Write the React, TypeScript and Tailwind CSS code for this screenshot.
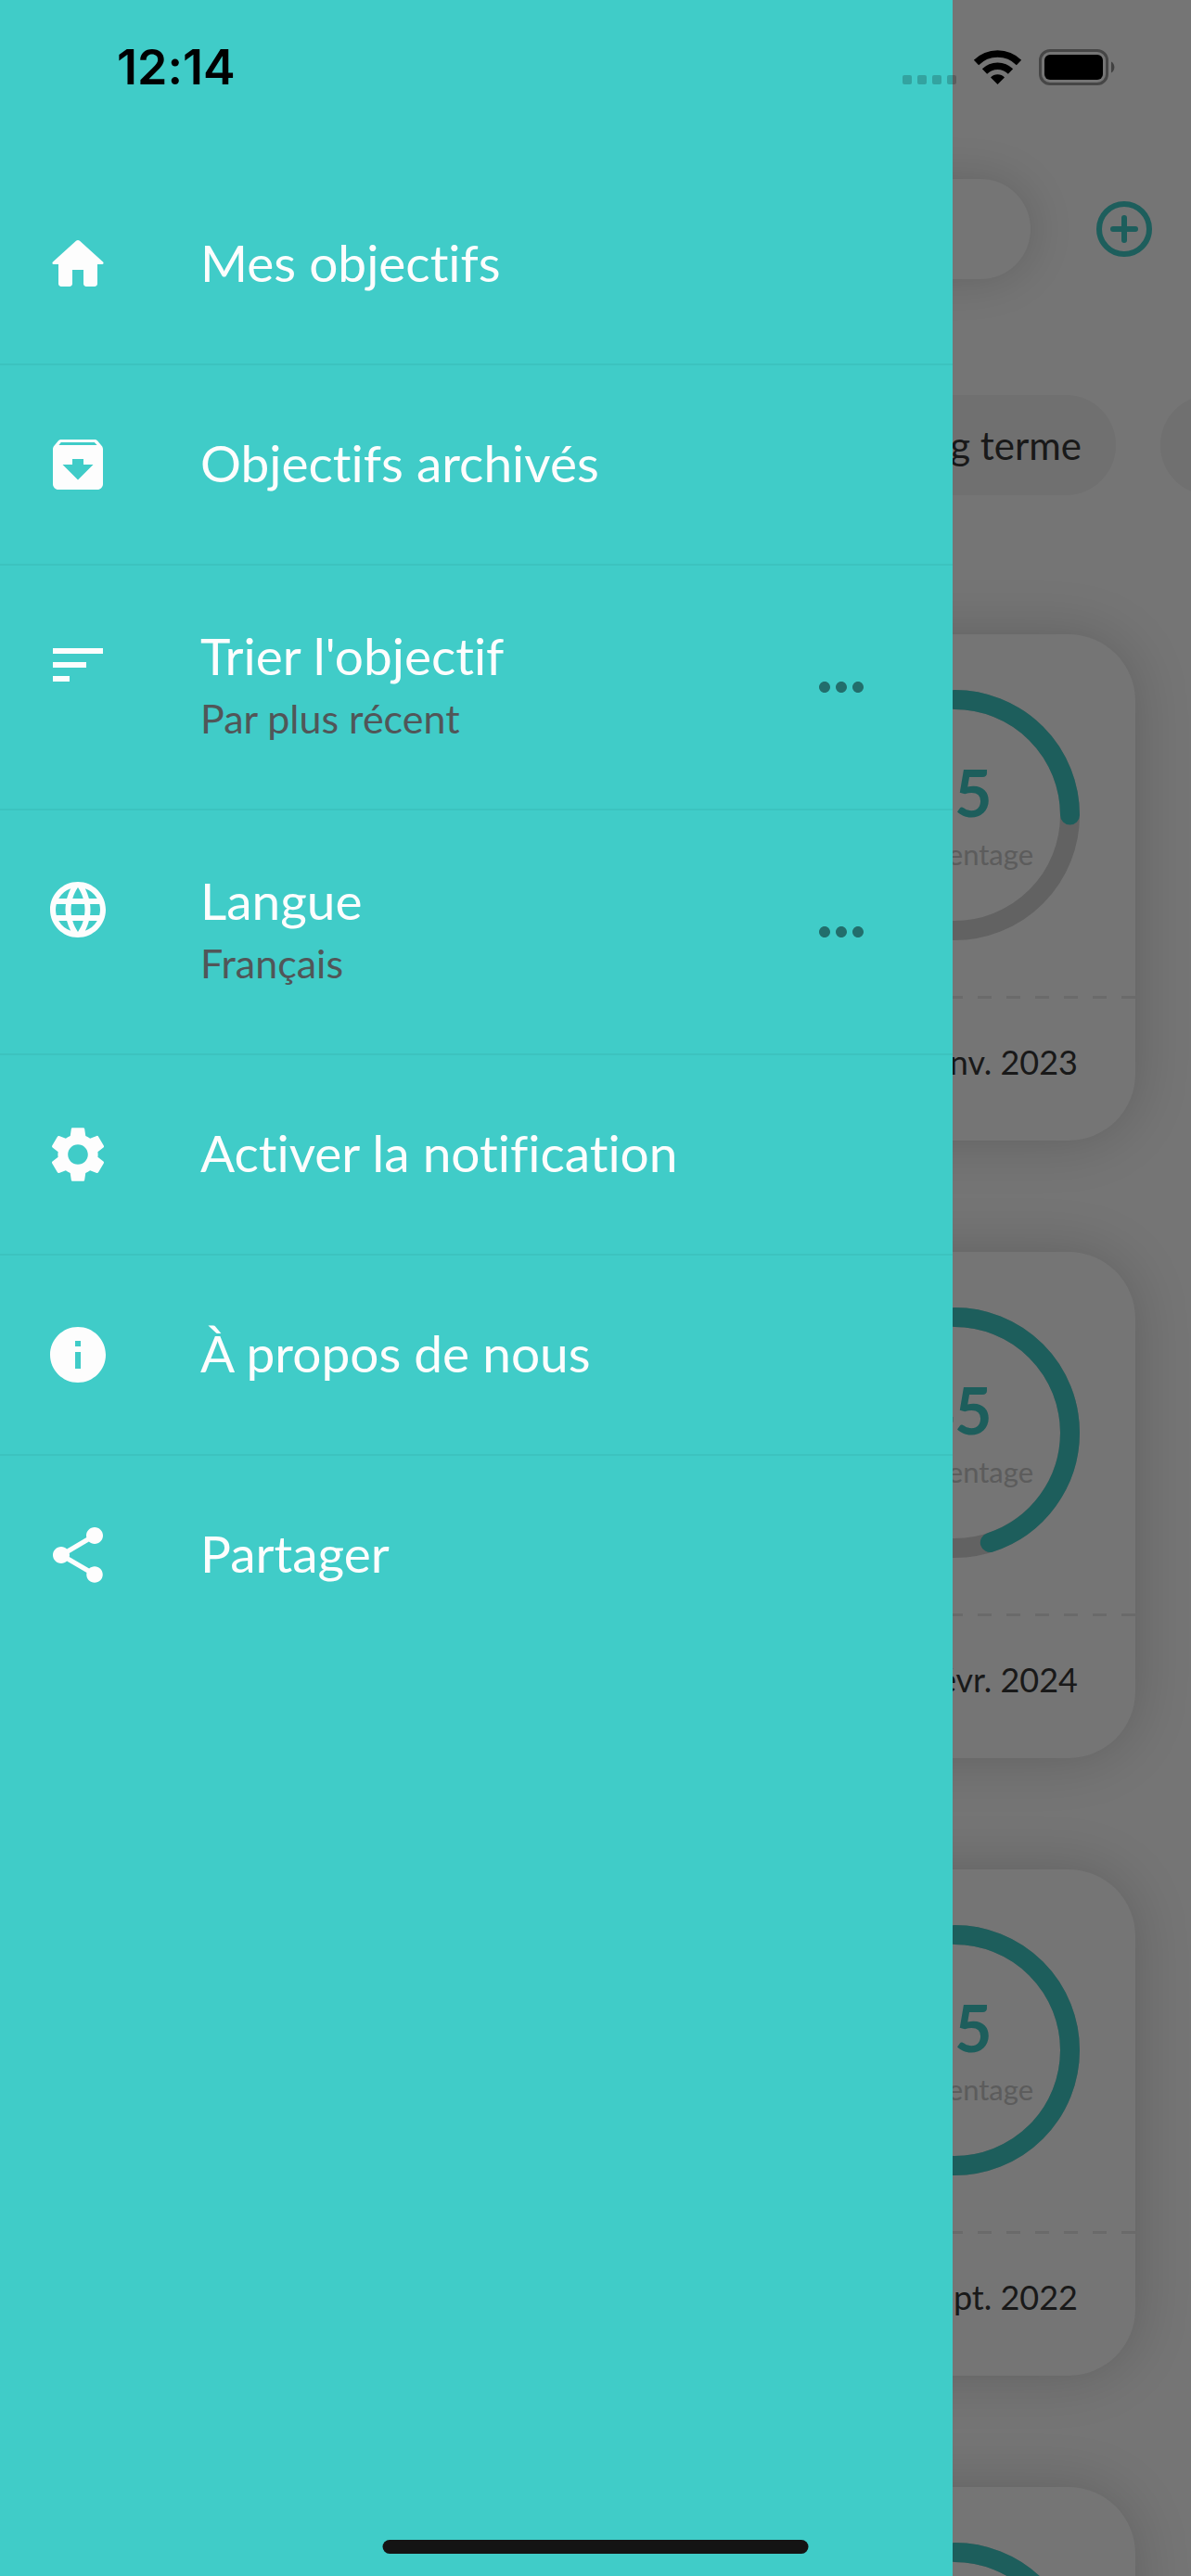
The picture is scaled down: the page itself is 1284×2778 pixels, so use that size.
import type { ReactNode } from 'react'
import { MdArchive, MdInfo, MdLanguage, MdMoreHoriz, MdSettings, MdShare, MdSort } from 'react-icons/md'

type MenuItem = {
  label: string
  detail?: string
  icon: ReactNode
}

const menu: MenuItem[] = [
  { label: 'Mes objectifs', icon: <HomeIcon /> },
  { label: 'Objectifs archivés', icon: <MdArchive className="size-18" /> },
  { label: "Trier l'objectif", detail: 'Par plus récent', icon: <MdSort className="size-18" /> },
  { label: 'Langue', detail: 'Français', icon: <MdLanguage className="size-18" /> },
  { label: 'Activer la notification', icon: <MdSettings className="size-18" /> },
  { label: 'À propos de nous', icon: <MdInfo className="size-18" /> },
  { label: 'Partager', icon: <MdShare className="size-18" /> },
]

const goals = [
  { percent: 25, date: '25 janv. 2023' },
  { percent: 45, date: '10 févr. 2024' },
  { percent: 75, date: '15 sept. 2022' },
  { percent: 75, date: '20 sept. 2022' },
]

function HomeIcon() {
  return (
    <svg viewBox="0 0 24 24" fill="currentColor" className="size-18">
      <path d="M10 19v-5h4v5c0 .55.45 1 1 1h3c.55 0 1-.45 1-1v-7h1.7c.46 0 .68-.57.33-.87L12.67 3.6c-.38-.34-.96-.34-1.34 0l-8.36 7.53c-.34.3-.13.87.33.87H5v7c0 .55.45 1 1 1h3c.55 0 1-.45 1-1z" />
    </svg>
  )
}

function StatusBar() {
  return (
    <div className="absolute inset-x-0 top-0 flex justify-between pl-[126px] pr-[82px] pt-[43px] text-black">
      <span className="font-[Inter,sans-serif] text-[52px] font-semibold leading-[60px]">12:14</span>
      <svg viewBox="0 0 229 40" className="mt-[10px] h-[40px] w-[229px]">
        <g fillOpacity="0.2">
          <rect x="0" y="28" width="10" height="10" rx="2" />
          <rect x="16" y="28" width="10" height="10" rx="2" />
          <rect x="32" y="28" width="10" height="10" rx="2" />
          <rect x="48" y="28" width="10" height="10" rx="2" />
        </g>
        <path d="M102.500 38 95 30.500a10.500 10.500 0 0 1 15 0z" />
        <path d="M88.500 24a19.800 19.800 0 0 1 28 0" fill="none" stroke="#000" strokeWidth="7.500" />
        <path d="M79.500 14.500a32.500 32.500 0 0 1 46 0" fill="none" stroke="#000" strokeWidth="7.500" />
        <rect x="148.500" y="1.500" width="72" height="36" rx="10.500" fill="none" stroke="#000" strokeOpacity="0.4" strokeWidth="3" />
        <rect x="153" y="6" width="63" height="27" rx="6" />
        <path d="M225 13.500a7 7 0 0 1 0 12z" fillOpacity="0.45" />
      </svg>
    </div>
  )
}

function Ring({ percent }: { percent: number }) {
  const length = 2 * Math.PI * 124.5
  return (
    <div className="relative size-[270px]">
      <svg viewBox="0 0 270 270" fill="none" strokeWidth="21" className="size-full -rotate-90">
        <circle cx="135" cy="135" r="124.5" stroke="#d5d5d5" />
        <circle
          cx="135"
          cy="135"
          r="124.5"
          stroke="#40ccc8"
          strokeLinecap="round"
          strokeDasharray={`${(length * percent) / 100} ${length}`}
        />
      </svg>
      <div className="absolute inset-0 flex flex-col items-center justify-center pt-1">
        <span className="text-[70px] font-bold leading-[80px] text-[#40ccc8]">{percent}</span>
        <span className="text-[31px] leading-[54px] text-[#c8c8c8]">Pourcentage</span>
      </div>
    </div>
  )
}

function GoalsPage() {
  return (
    <main className="flex flex-col bg-[#fefefe] pt-[193px]">
      <div className="flex items-center gap-[71px] pl-[60px] pr-[42px]">
        <input
          type="search"
          aria-label="Rechercher"
          className="h-[108px] min-w-0 flex-1 rounded-full bg-[#fefefe] px-12 shadow-[0_0_48px_rgba(0,0,0,0.16)]"
        />
        <button aria-label="Ajouter" className="text-[#40ccc8]">
          <svg viewBox="0 0 60 60" fill="none" stroke="currentColor" strokeWidth="6" strokeLinecap="round" className="size-[60px]">
            <circle cx="30" cy="30" r="27" />
            <path d="M30 18v24M18 30h24" />
          </svg>
        </button>
      </div>

      <div className="-mr-[207px] mt-[125px] flex justify-end gap-12 text-[42px] text-[#373737]">
        <button className="h-[108px] shrink-0 rounded-full bg-[#f3f3f3] px-[37px]">Long terme</button>
        <button aria-label="Terminés" className="h-[108px] w-[240px] shrink-0 rounded-full bg-[#f3f3f3]" />
      </div>

      <div className="mt-[150px] flex flex-col gap-[120px] px-[60px]">
        {goals.map((goal, i) => (
          <article key={i} className="rounded-[72px] bg-[#fefefe] shadow-[0_0_60px_rgba(0,0,0,0.18)]">
            <div className="flex justify-end p-[60px]">
              <Ring percent={goal.percent} />
            </div>
            <div className="h-[3px] bg-[repeating-linear-gradient(to_left,#e6e6e6_0_15px,transparent_15px_31px)]" />
            <p className="px-[62px] pb-[55px] pt-[38px] text-right text-[36px] leading-[60px] text-[#373737]">{goal.date}</p>
          </article>
        ))}
      </div>
    </main>
  )
}

function MenuRow({ item }: { item: MenuItem }) {
  if (item.detail) {
    return (
      <li className="flex h-[264px] items-center border-b-2 border-[#3cc3bf] pl-12 pr-[84px]">
        <div className="flex flex-1 items-start gap-24 self-start pt-[71px]">
          {item.icon}
          <div className="-mt-2">
            <p className="text-[55px] leading-[68px]">{item.label}</p>
            <p className="text-[43px] leading-[68px] text-[#515658]">{item.detail}</p>
          </div>
        </div>
        <button aria-label={item.label} className="text-[#226e6c]">
          <MdMoreHoriz className="size-18" />
        </button>
      </li>
    )
  }
  return (
    <li className="border-b-2 border-[#3cc3bf] last:border-transparent">
      <button className="flex h-[214px] w-full items-center gap-24 pl-12 text-left">
        {item.icon}
        <span className="pb-1 text-[55px] leading-[72px]">{item.label}</span>
      </button>
    </li>
  )
}

export default function App() {
  return (
    <div className="relative h-screen overflow-hidden font-[Lato,sans-serif] [font-variant-ligatures:none]">
      <GoalsPage />
      <div className="absolute inset-0 bg-black/54" />
      <nav className="absolute inset-y-0 left-0 w-4/5 bg-[#40ccc8] pt-[178px] text-[#fdfdfd]">
        <ul>
          {menu.map((item) => (
            <MenuRow key={item.label} item={item} />
          ))}
        </ul>
      </nav>
      <StatusBar />
      <div className="absolute bottom-6 left-1/2 h-[15px] w-[459px] -translate-x-1/2 rounded-full bg-[#141414]" />
    </div>
  )
}
